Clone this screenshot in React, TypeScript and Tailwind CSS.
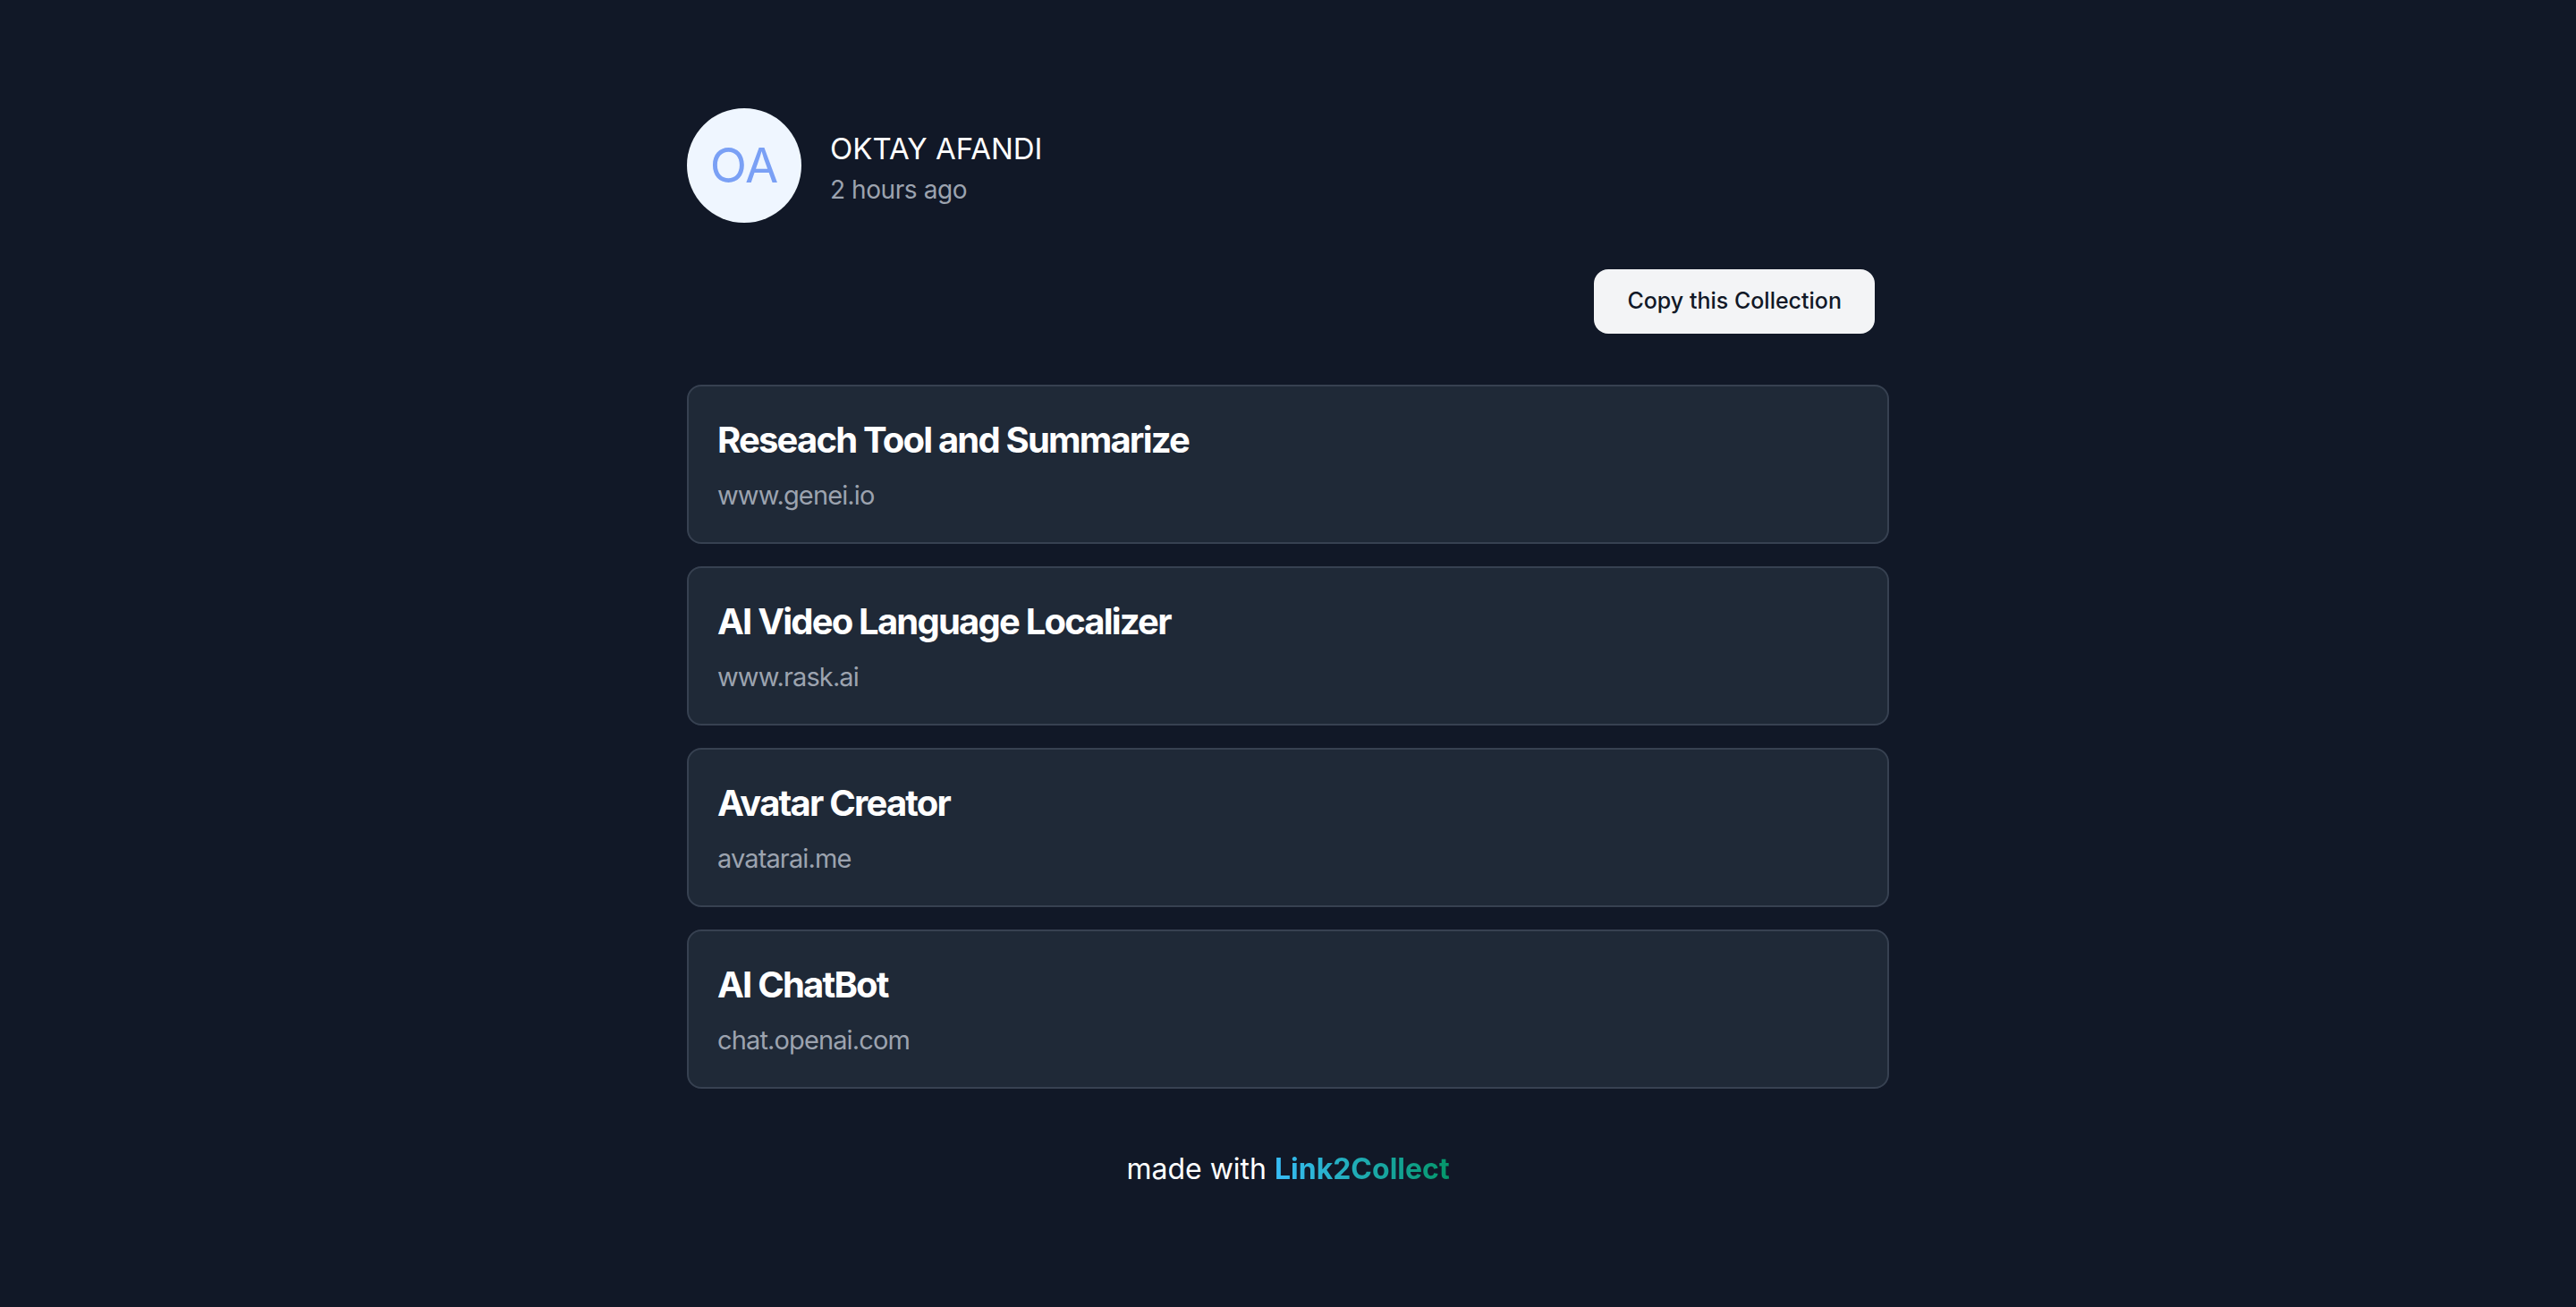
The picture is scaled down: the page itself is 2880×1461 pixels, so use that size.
import React from "react";

const items = [
  { title: "Reseach Tool and Summarize", url: "www.genei.io" },
  { title: "AI Video Language Localizer", url: "www.rask.ai" },
  { title: "Avatar Creator", url: "avatarai.me" },
  { title: "AI ChatBot", url: "chat.openai.com" },
];

export default function App() {
  return (
    <div
      className="min-h-screen w-full bg-[#111827] text-white"
      style={{ fontFamily: "Inter, 'Noto Sans', sans-serif" }}
    >
      <div className="mx-auto w-[1344px] pt-[121px] pb-[100px]">
        <div className="flex items-center gap-[32px]">
          <div className="flex h-[128px] w-[128px] items-center justify-center rounded-full bg-[#eff6ff]">
            <span className="text-[54px] leading-none text-[#7aa0f5]">OA</span>
          </div>
          <div className="flex flex-col pt-[6px]">
            <div className="text-[33px] leading-[44px] text-white">OKTAY AFANDI</div>
            <div className="mt-[4px] text-[28px] leading-[40px] tracking-[-0.015em] text-[#9ca3af]">2 hours ago</div>
          </div>
        </div>

        <div className="mt-[52px] flex justify-end pr-[16px]">
          <button className="flex h-[72px] items-center rounded-[16px] bg-[#f3f4f6] px-[37px] text-[25px] font-medium text-[#111827]">
            Copy this Collection
          </button>
        </div>

        <div className="mt-[57px] flex flex-col gap-[25px]">
          {items.map((it) => (
            <div
              key={it.title}
              className="rounded-[16px] border-2 border-[#374151] bg-[#1f2937] px-[32px] pt-[32px] pb-[28px]"
            >
              <div className="text-[40px] font-bold leading-[56px] tracking-[-0.045em] text-white">
                {it.title}
              </div>
              <div className="mt-[10px] text-[29px] leading-[48px] tracking-[-0.03em] text-[#9ca3af]">{it.url}</div>
            </div>
          ))}
        </div>

        <div className="mt-[68px] text-center text-[32px] leading-[44px] text-white">
          made with{" "}
          <span className="bg-gradient-to-r from-[#38bdf8] to-[#059669] bg-clip-text font-bold text-transparent">
            Link2Collect
          </span>
        </div>
      </div>
    </div>
  );
}
